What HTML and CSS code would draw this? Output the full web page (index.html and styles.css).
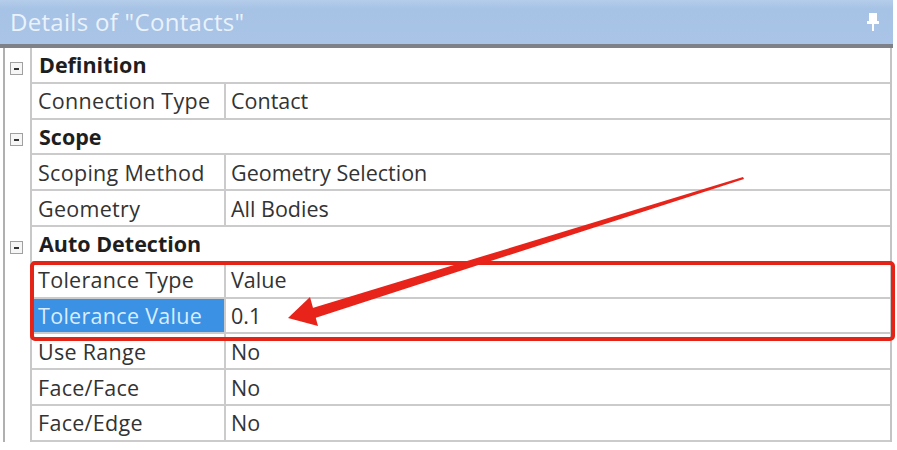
FILE: index.html
```html
<!DOCTYPE html>
<html lang="en">
<head>
    <meta charset="UTF-8">
    <meta name="viewport" content="width=device-width, initial-scale=1.0">
    <title>Details of "Contacts"</title>
    <link rel="stylesheet" href="styles.css">
</head>
<body>
    <div class="panel">
        <header class="title-bar">
            <span class="title">Details of "Contacts"</span>
            <svg class="pin" width="12" height="20" viewBox="0 0 12 20">
                <rect x="2" y="1" width="8" height="9" fill="#fff"/>
                <rect x="0" y="9" width="12" height="3" fill="#fff"/>
                <rect x="5" y="12" width="2" height="7" fill="#fff"/>
            </svg>
        </header>

        <div class="grid">
            <div class="row category">
                <div class="gutter"><span class="toggle"></span></div>
                <div class="cell name">Definition</div>
            </div>
            <div class="row">
                <div class="gutter"></div>
                <div class="cell key">Connection Type</div>
                <div class="cell value">Contact</div>
            </div>

            <div class="row category">
                <div class="gutter"><span class="toggle"></span></div>
                <div class="cell name">Scope</div>
            </div>
            <div class="row">
                <div class="gutter"></div>
                <div class="cell key">Scoping Method</div>
                <div class="cell value">Geometry Selection</div>
            </div>
            <div class="row">
                <div class="gutter"></div>
                <div class="cell key">Geometry</div>
                <div class="cell value">All Bodies</div>
            </div>

            <div class="row category">
                <div class="gutter"><span class="toggle"></span></div>
                <div class="cell name">Auto Detection</div>
            </div>
            <div class="row">
                <div class="gutter"></div>
                <div class="cell key">Tolerance Type</div>
                <div class="cell value">Value</div>
            </div>
            <div class="row">
                <div class="gutter"></div>
                <div class="cell key selected">Tolerance Value</div>
                <div class="cell value">0.1</div>
            </div>
            <div class="row">
                <div class="gutter"></div>
                <div class="cell key">Use Range</div>
                <div class="cell value">No</div>
            </div>
            <div class="row">
                <div class="gutter"></div>
                <div class="cell key">Face/Face</div>
                <div class="cell value">No</div>
            </div>
            <div class="row">
                <div class="gutter"></div>
                <div class="cell key">Face/Edge</div>
                <div class="cell value">No</div>
            </div>
        </div>

        <!-- annotation drawn over the grid -->
        <div class="callout"></div>
        <svg class="arrow" width="897" height="450" viewBox="0 0 897 450">
            <polygon points="743,177 744,179 312,319 306,310" fill="#e8231a"/>
            <polygon points="288,318 310,297 318,326" fill="#e8231a"/>
        </svg>
    </div>
</body>
</html>
```

FILE: styles.css
```css
body {
    margin: 0;
    background: #fff;
    font-family: "Open Sans", "Noto Sans", sans-serif;
    color: #333;
}

.panel {
    position: relative;
    width: 897px;
    height: 450px;
    overflow: hidden;
}

.title-bar {
    display: flex;
    align-items: center;
    justify-content: space-between;
    height: 48px;
    width: 893px;
    padding: 0 14px 2px 10px;
    box-sizing: border-box;
    background: linear-gradient(to bottom, #b4cdea, #a6c2e5 20%, #a9c4e6);
    border-bottom: 4px solid #7e8288;
}

.title {
    font-size: 24px;
    color: #eaf2fb;
    letter-spacing: 0.3px;
}

.pin {
    margin-top: 2px;
}

.grid {
    margin-left: 3px;
    width: 885px;
    border-left: 2px solid #b0b0b0;
    border-right: 2px solid #c4c4c4;
}

.row {
    display: grid;
    grid-template-columns: 27px 194px 1fr;
    height: 35.8px;
}

.row.category {
    grid-template-columns: 27px 1fr;
}

.gutter {
    display: flex;
    align-items: center;
    justify-content: center;
    border-right: 2px solid #c8c8c8;
    padding-top: 5px;
    padding-right: 3px;
}

.toggle {
    position: relative;
    width: 11px;
    height: 11px;
    border: 1px solid #a0a0a0;
    background: #f6f6f6;
}

.toggle::after {
    content: "";
    position: absolute;
    left: 3px;
    top: 5px;
    width: 5px;
    height: 2px;
    background: #333;
}

.cell {
    display: flex;
    align-items: center;
    padding-left: 6px;
    font-size: 21.5px;
    border-bottom: 2px solid #cbcbcb;
    white-space: nowrap;
}

.name {
    font-weight: bold;
    color: #1e1e1e;
    padding-left: 7px;
}

.key {
    border-right: 2px solid #cbcbcb;
    letter-spacing: 0.3px;
}

.key.selected {
    background: #3b91e4;
    color: #d9edff;
    margin-left: 2px;
    padding-left: 4px;
}

.value {
    padding-left: 5px;
}

.callout {
    position: absolute;
    left: 30px;
    top: 261px;
    width: 857px;
    height: 72px;
    border: 4px solid #e52418;
    border-radius: 5px;
}

.arrow {
    position: absolute;
    left: 0;
    top: 0;
}
```
